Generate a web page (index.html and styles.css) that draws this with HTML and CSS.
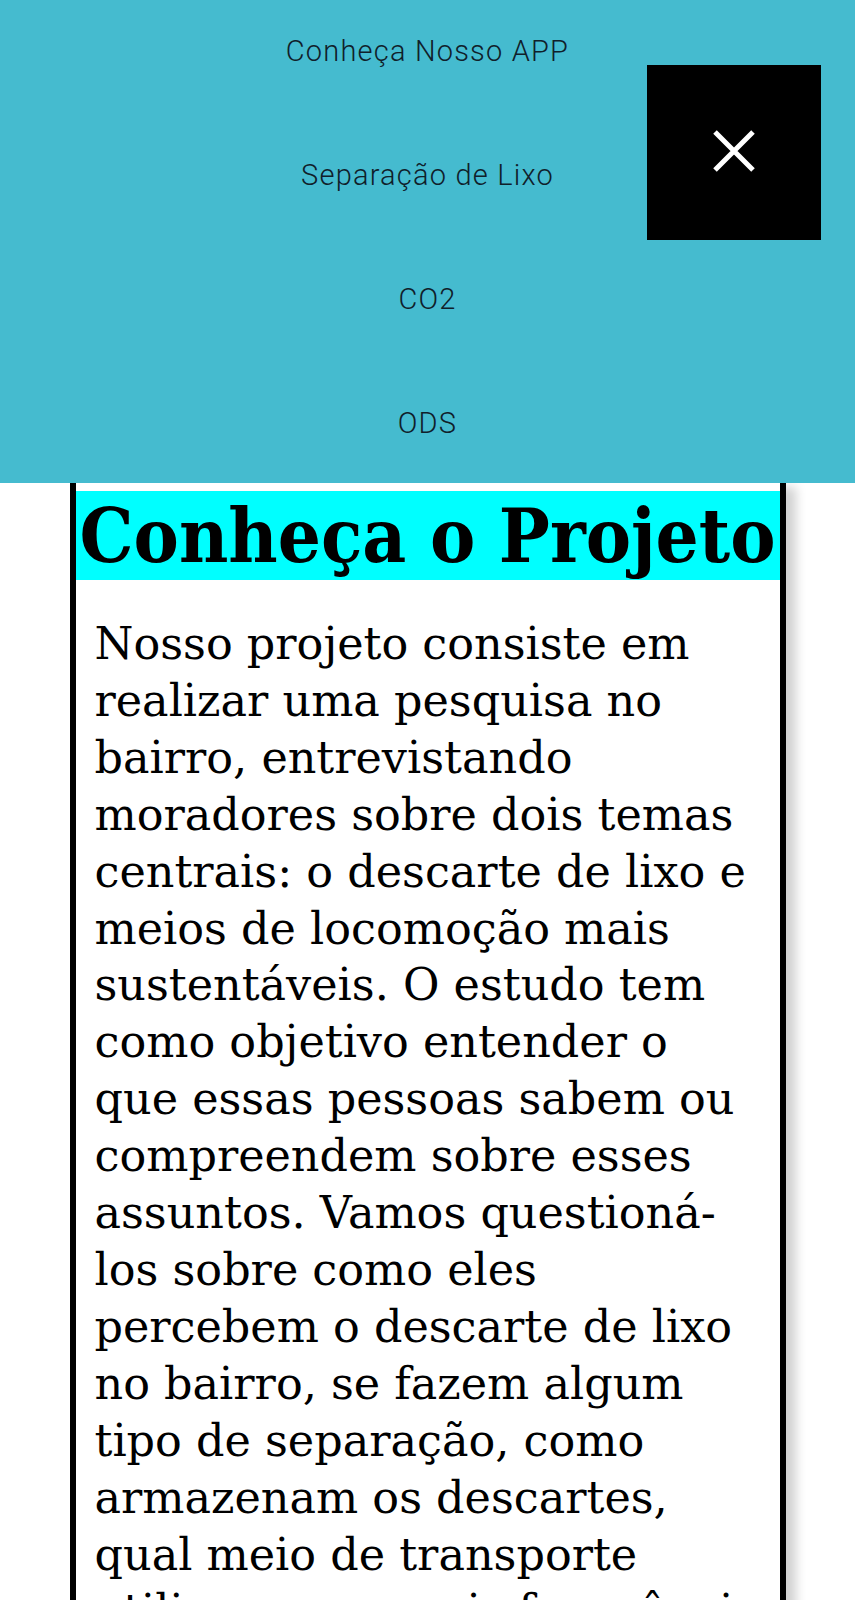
FILE: index.html
```html
<!DOCTYPE html>
<html lang="pt-BR">
<head>
<meta charset="utf-8">
<title>Conheça o Projeto</title>
<link rel="stylesheet" href="styles.css">
</head>
<body>
<nav class="menu">
  <a class="menu-link" href="#">Conheça Nosso APP</a>
  <a class="menu-link" href="#">Separação de Lixo</a>
  <a class="menu-link" href="#">CO2</a>
  <a class="menu-link" href="#">ODS</a>
  <button class="close-btn" aria-label="Fechar">
    <svg width="44" height="44" viewBox="0 0 44 44"><path d="M3 3 L41 41 M41 3 L3 41" stroke="#fff" stroke-width="5" fill="none"/></svg>
  </button>
</nav>
<main class="card">
  <h1 class="card-title">Conheça o Projeto</h1>
  <p class="card-text">Nosso projeto consiste em realizar uma pesquisa no bairro, entrevistando moradores sobre dois temas centrais: o descarte de lixo e meios de locomoção mais sustentáveis. O estudo tem como objetivo entender o que essas pessoas sabem ou compreendem sobre esses assuntos. Vamos questioná-los sobre como eles percebem o descarte de lixo no bairro, se fazem algum tipo de separação, como armazenam os descartes, qual meio de transporte utilizam com mais frequência e se conhecem alternativas mais sustentáveis.</p>
</main>
</body>
</html>
```
FILE: styles.css
```css
* { box-sizing: border-box; }
html, body { margin: 0; padding: 0; background: #fff; }

.menu {
  position: relative;
  height: 483px;
  background: #45bbcf;
  display: flex;
  flex-direction: column;
  align-items: center;
  gap: 92px;
  padding-top: 35px;
}
.menu-link {
  font-family: Roboto, "Noto Sans", sans-serif;
  font-size: 29px;
  line-height: 32px;
  font-weight: 300;
  letter-spacing: 1.2px;
  color: #10202a;
  text-decoration: none;
}
.close-btn {
  position: absolute;
  top: 65px;
  right: 34px;
  width: 174px;
  height: 175px;
  background: #000;
  border: 0;
  padding: 0;
  display: flex;
  align-items: center;
  justify-content: center;
}
.close-btn svg { margin-top: -4px; }

.card {
  width: 716px;
  margin: 0 auto;
  border: 6px solid #000;
  border-top: 0;
  padding-top: 8px;
  background: #fff;
  box-shadow: 10px 4px 10px rgba(0,0,0,0.18);
  min-height: 1200px;
}
.card-title {
  margin: 0;
  background: #00ffff;
  height: 89px;
  line-height: 89px;
  text-align: center;
  font-family: "DejaVu Serif Condensed", "DejaVu Serif", serif;
  font-stretch: condensed;
  font-weight: 700;
  font-size: 75.5px;
  white-space: nowrap;
  overflow: hidden;
  color: #000;
}
.card-text {
  margin: 36px 19px 0 19px;
  font-family: "DejaVu Serif", serif;
  font-size: 44.5px;
  line-height: 56.9px;
  color: #000;
}
```
